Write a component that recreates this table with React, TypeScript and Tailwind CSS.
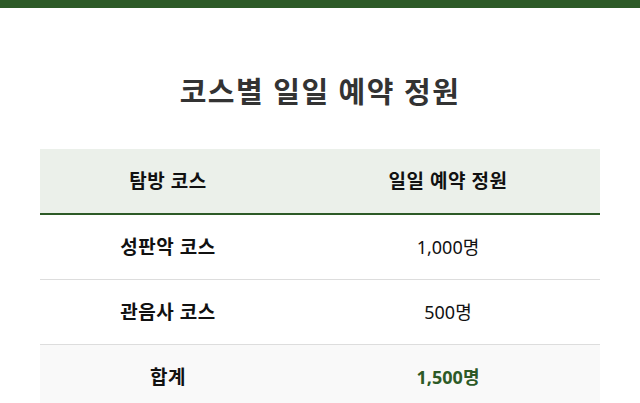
export default function App() {
  const font = { fontFamily: '"Noto Sans", "Noto Sans CJK KR", sans-serif' };
  const bold = "py-5 leading-6 text-center font-bold text-[19px] tracking-[0.5px]";
  const num = "py-5 leading-6 text-center text-[18px]";
  return (
    <div className="min-h-[403px] bg-white" style={font}>
      <div className="h-2 bg-[#2d5a27]" />
      <div className="px-10 pt-[23px]">
        <h1 className="text-center text-[29px] tracking-[1.5px] font-bold leading-[42px] text-[#333] mt-[40px] mb-[36px]">
          코스별 일일 예약 정원
        </h1>
        <div className="grid grid-cols-[256px_304px] text-[#111]">
          <div className={`bg-[#ebf0ea] border-b-2 border-[#2d5a27] ${bold}`}>탐방 코스</div>
          <div className={`bg-[#ebf0ea] border-b-2 border-[#2d5a27] ${bold}`}>일일 예약 정원</div>
          <div className={`border-b border-[#ddd] ${bold}`}>성판악 코스</div>
          <div className={`border-b border-[#ddd] ${num}`}>1,000명</div>
          <div className={`border-b border-[#ddd] ${bold}`}>관음사 코스</div>
          <div className={`border-b border-[#ddd] ${num}`}>500명</div>
          <div className={`bg-[#f9f9f9] ${bold}`}>합계</div>
          <div className={`bg-[#f9f9f9] ${num} font-bold text-[#2d5a27]`}>1,500명</div>
        </div>
      </div>
    </div>
  );
}
